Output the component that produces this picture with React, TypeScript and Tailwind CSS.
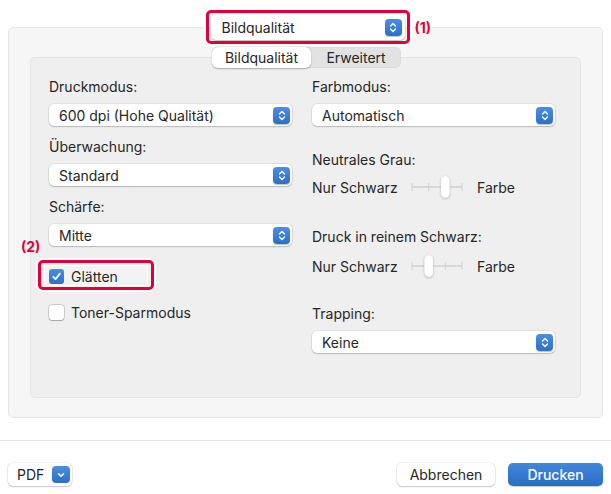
import React from 'react'

const FONT = 'font-["Inter","Liberation_Sans",sans-serif]'

// Small blue up/down stepper used inside popup buttons
const Stepper = () => (
  <span className="flex h-[17px] w-[17px] items-center justify-center rounded-[4px] bg-gradient-to-b from-[#4b8fe0] to-[#2c6fcc] shadow-[0_0.5px_1px_rgba(0,0,0,0.25)]">
    <svg width="8" height="11" viewBox="0 0 8 11" fill="none" stroke="white" strokeWidth="1.4" strokeLinecap="round" strokeLinejoin="round">
      <path d="M1.5 4 L4 1.5 L6.5 4" />
      <path d="M1.5 7 L4 9.5 L6.5 7" />
    </svg>
  </span>
)

const Popup = ({ value, className = '' }: { value: string; className?: string }) => (
  <div
    className={`flex h-[22px] items-center justify-between rounded-[5px] bg-white pl-[10px] pr-[2px] text-[14px] text-[#262626] shadow-[0_0_0_0.5px_rgba(0,0,0,0.12),0_1px_1.5px_rgba(0,0,0,0.18)] ${className}`}
  >
    <span>{value}</span>
    <Stepper />
  </div>
)

const Label = ({ children, className = '' }: { children: React.ReactNode; className?: string }) => (
  <div className={`h-4 text-[14px] leading-4 text-[#262626] ${className}`}>{children}</div>
)

// Four-stop slider, knob index 0..3
const Slider = ({ pos }: { pos: number }) => {
  const stops = [0, 16.7, 33.3, 50]
  return (
    <svg width="52" height="24" viewBox="-1 0 52 24" className="overflow-visible">
      <line x1="0" y1="12" x2="50" y2="12" stroke="#d8d8d8" strokeWidth="2" />
      {stops.map((x, i) => (
        <line key={i} x1={x} y1="8" x2={x} y2="16" stroke="#cfcfcf" strokeWidth="1" />
      ))}
      <rect
        x={stops[pos] - 4.5}
        y="1"
        width="9"
        height="22"
        rx="4.5"
        fill="white"
        stroke="rgba(0,0,0,0.12)"
        strokeWidth="0.5"
        style={{ filter: 'drop-shadow(0 1px 1px rgba(0,0,0,0.2))' }}
      />
    </svg>
  )
}

const SliderRow = ({ pos, className = '' }: { pos: number; className?: string }) => (
  <div className={`flex h-[22px] items-center text-[14px] text-[#262626] ${className}`}>
    <span className="w-[99px]">Nur Schwarz</span>
    <Slider pos={pos} />
    <span className="ml-[14px]">Farbe</span>
  </div>
)

const Checkbox = ({ checked }: { checked: boolean }) =>
  checked ? (
    <span className="flex h-[15px] w-[15px] items-center justify-center rounded-[3px] bg-gradient-to-b from-[#4a8fe2] to-[#2d6fcf]">
      <svg width="11" height="11" viewBox="0 0 11 11" fill="none" stroke="white" strokeWidth="1.8" strokeLinecap="round" strokeLinejoin="round">
        <path d="M2.3 5.8 L4.5 8.2 L8.8 2.6" />
      </svg>
    </span>
  ) : (
    <span className="h-[15px] w-[15px] rounded-[3px] bg-white shadow-[0_0_0_0.5px_rgba(0,0,0,0.25),0_0.5px_1px_rgba(0,0,0,0.2)]" />
  )

export default function App() {
  return (
    <div className={`relative flex h-[494px] w-[611px] flex-col bg-white ${FONT}`}>
      {/* Outer group box */}
      <div className="mx-[8px] mt-[27px] h-[391px] rounded-[5px] border border-[#e6e6e6] bg-[#f6f6f6] px-[21px]">
        {/* Preset popup overlapping the top edge */}
        <div className="-mt-[14px] flex justify-center">
          <div className="relative ml-[4px]">
            <Popup value="Bildqualität" className="h-[26px] w-[194px] pl-[11px] pr-[3px]" />
            <div className="pointer-events-none absolute -left-[5px] -top-[4px] h-[34px] w-[204px] rounded-[5px] border-[3px] border-[#e0003a] shadow-[0_0_0_2px_white]" />
            <span className="absolute left-[204px] top-[3px] text-[14px] font-bold text-[#e0003a]">(1)</span>
          </div>
        </div>

        {/* Tabs */}
        <div className="relative z-10 mt-[7px] flex justify-center">
          <div className="ml-[2px] flex h-[21px] rounded-[6px] bg-[#e2e2e2] text-[14px] text-[#262626] shadow-[inset_0_0_0_0.5px_rgba(0,0,0,0.06)]">
            <div className="flex w-[99px] items-center justify-center rounded-[6px] bg-white shadow-[0_0.5px_1.5px_rgba(0,0,0,0.3)]">
              Bildqualität
            </div>
            <div className="flex w-[90px] items-center justify-center">Erweitert</div>
          </div>
        </div>

        {/* Inner box */}
        <div className="-mt-[11px] flex h-[341px] gap-[20px] rounded-[5px] border border-[#e4e4e4] bg-[#efefef] pl-[18px] pt-[21px]">
          {/* Left column */}
          <div className="flex w-[243px] flex-col">
            <Label>Druckmodus:</Label>
            <Popup value="600 dpi (Hohe Qualität)" className="mt-[9px]" />
            <Label className="mt-[13px]">Überwachung:</Label>
            <Popup value="Standard" className="mt-[9px]" />
            <Label className="mt-[13px]">Schärfe:</Label>
            <Popup value="Mitte" className="mt-[9px]" />

            <div className="relative mt-[20px] flex h-[20px] items-center text-[14px] text-[#262626]">
              <div className="absolute -left-[5px] -top-[1px] h-[21px] w-[104px] bg-[#f3f3f3] shadow-[inset_0_0_0_1px_white]" />
              <span className="relative">
                <Checkbox checked />
              </span>
              <span className="relative ml-[7px]">Glätten</span>
              <div className="pointer-events-none absolute -left-[11px] -top-[6px] h-[30px] w-[116px] rounded-[5px] border-[3px] border-[#e0003a] shadow-[0_0_0_2px_white]" />
              <span className="absolute -left-[28px] -top-[30px] text-[14px] font-bold text-[#e0003a]">(2)</span>
            </div>

            <div className="mt-[16px] flex h-[20px] items-center text-[14px] text-[#262626]">
              <Checkbox checked={false} />
              <span className="ml-[7px]">Toner-Sparmodus</span>
            </div>
          </div>

          {/* Right column */}
          <div className="flex w-[243px] flex-col">
            <Label>Farbmodus:</Label>
            <Popup value="Automatisch" className="mt-[9px]" />
            <Label className="mt-[26px]">Neutrales Grau:</Label>
            <SliderRow pos={2} className="mt-[8px]" />
            <Label className="mt-[31px]">Druck in reinem Schwarz:</Label>
            <SliderRow pos={1} className="mt-[10px]" />
            <Label className="mt-[29px]">Trapping:</Label>
            <Popup value="Keine" className="mt-[9px]" />
          </div>
        </div>
      </div>

      {/* Footer */}
      <div className="mt-[22px] flex flex-1 items-start justify-between border-t border-[#e3e3e3] px-[8px] pt-[22px] text-[14px] text-[#262626]">
        <div className="flex h-[23px] w-[64px] items-center justify-between rounded-[5px] bg-white pl-[9px] pr-[2px] shadow-[0_0_0_0.5px_rgba(0,0,0,0.12),0_1px_1.5px_rgba(0,0,0,0.18)]">
          <span>PDF</span>
          <span className="flex h-[17px] w-[18px] items-center justify-center rounded-[4px] bg-gradient-to-b from-[#4b8fe0] to-[#2c6fcc]">
            <svg width="8" height="6" viewBox="0 0 8 6" fill="none" stroke="white" strokeWidth="1.5" strokeLinecap="round" strokeLinejoin="round">
              <path d="M1.5 1.8 L4 4.3 L6.5 1.8" />
            </svg>
          </span>
        </div>
        <div className="flex gap-[13px]">
          <button className="flex h-[23px] w-[98px] items-center justify-center rounded-[5px] bg-white shadow-[0_0_0_0.5px_rgba(0,0,0,0.12),0_1px_1.5px_rgba(0,0,0,0.18)]">
            Abbrechen
          </button>
          <button className="flex h-[23px] w-[95px] items-center justify-center rounded-[5px] bg-gradient-to-b from-[#4088dc] to-[#2a6bc6] font-medium text-white shadow-[0_0.5px_1px_rgba(0,0,0,0.2)]">
            Drucken
          </button>
        </div>
      </div>
    </div>
  )
}
